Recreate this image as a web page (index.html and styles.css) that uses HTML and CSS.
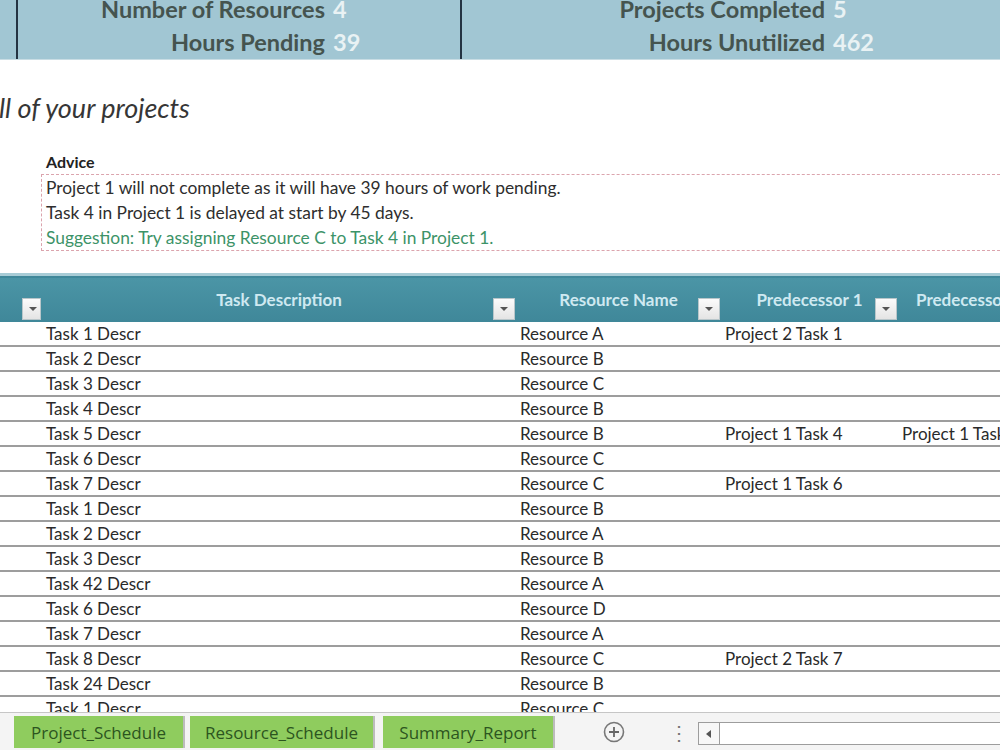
FILE: index.html
```html
<!DOCTYPE html>
<html lang="en">
<head>
  <meta charset="UTF-8" />
  <title>Project Schedule</title>
  <link rel="stylesheet" href="styles.css">
</head>
<body>
  <div class="sheet">
    <div class="stats">
      <div class="stat-edge"></div>
      <div class="stat-group first">
        <span class="stat-label">Number of Resources</span><span class="stat-value">4</span>
        <span class="stat-label">Hours Pending</span><span class="stat-value">39</span>
      </div>
      <div class="stat-group second">
        <span class="stat-label">Projects Completed</span><span class="stat-value">5</span>
        <span class="stat-label">Hours Unutilized</span><span class="stat-value">462</span>
      </div>
      <div class="stat-edge"></div>
    </div>

    <h2 class="title">ll of your projects</h2>

    <div class="advice">
      <div class="advice-head">Advice</div>
      <div class="advice-box">
        <div>Project 1 will not complete as it will have 39 hours of work pending.</div>
        <div>Task 4 in Project 1 is delayed at start by 45 days.</div>
        <div class="suggestion">Suggestion: Try assigning Resource C to Task 4 in Project 1.</div>
      </div>
    </div>

    <table class="tasks">
      <colgroup>
        <col class="c0"><col class="c1"><col class="c2"><col class="c3"><col class="c4">
      </colgroup>
      <thead>
        <tr>
          <th><div class="th"><span class="th-label"></span><span class="filter"></span></div></th>
          <th><div class="th"><span class="th-label">Task Description</span><span class="filter"></span></div></th>
          <th><div class="th"><span class="th-label">Resource Name</span><span class="filter"></span></div></th>
          <th><div class="th"><span class="th-label">Predecessor 1</span><span class="filter"></span></div></th>
          <th><div class="th"><span class="th-label left">Predecessor 2</span></div></th>
        </tr>
      </thead>
      <tbody>
        <tr><td></td><td>Task 1 Descr</td><td>Resource A</td><td>Project 2 Task 1</td><td></td></tr>
        <tr><td></td><td>Task 2 Descr</td><td>Resource B</td><td></td><td></td></tr>
        <tr><td></td><td>Task 3 Descr</td><td>Resource C</td><td></td><td></td></tr>
        <tr><td></td><td>Task 4 Descr</td><td>Resource B</td><td></td><td></td></tr>
        <tr><td></td><td>Task 5 Descr</td><td>Resource B</td><td>Project 1 Task 4</td><td>Project 1 Task 6</td></tr>
        <tr><td></td><td>Task 6 Descr</td><td>Resource C</td><td></td><td></td></tr>
        <tr><td></td><td>Task 7 Descr</td><td>Resource C</td><td>Project 1 Task 6</td><td></td></tr>
        <tr><td></td><td>Task 1 Descr</td><td>Resource B</td><td></td><td></td></tr>
        <tr><td></td><td>Task 2 Descr</td><td>Resource A</td><td></td><td></td></tr>
        <tr><td></td><td>Task 3 Descr</td><td>Resource B</td><td></td><td></td></tr>
        <tr><td></td><td>Task 42 Descr</td><td>Resource A</td><td></td><td></td></tr>
        <tr><td></td><td>Task 6 Descr</td><td>Resource D</td><td></td><td></td></tr>
        <tr><td></td><td>Task 7 Descr</td><td>Resource A</td><td></td><td></td></tr>
        <tr><td></td><td>Task 8 Descr</td><td>Resource C</td><td>Project 2 Task 7</td><td></td></tr>
        <tr><td></td><td>Task 24 Descr</td><td>Resource B</td><td></td><td></td></tr>
        <tr><td></td><td>Task 1 Descr</td><td>Resource C</td><td></td><td></td></tr>
      </tbody>
    </table>
  </div>

  <div class="tabbar">
    <div class="tab t1">Project_Schedule</div>
    <div class="tab t2">Resource_Schedule</div>
    <div class="tab t3">Summary_Report</div>
    <div class="add-sheet">
      <svg width="22" height="22" viewBox="0 0 22 22">
        <circle cx="11" cy="11" r="9.5" fill="none" stroke="#777" stroke-width="1.6"/>
        <path d="M11 6v10M6 11h10" stroke="#666" stroke-width="1.8"/>
      </svg>
    </div>
    <div class="more">&#8942;</div>
    <div class="hscroll">
      <span class="hscroll-btn">
        <svg width="6" height="8" viewBox="0 0 6 8"><path d="M5 0v8L0 4z" fill="#555"/></svg>
      </span>
    </div>
  </div>
</body>
</html>
```

FILE: styles.css
```css
html, body {
  margin: 0;
  height: 100%;
  overflow: hidden;
  background: #fff;
  font-family: Lato, "Liberation Sans", sans-serif;
  color: #2b2b2b;
}

body {
  display: flex;
  flex-direction: column;
  width: 1000px;
  height: 750px;
}

.sheet {
  flex: 1;
  overflow: hidden;
}

/* summary band across the top */
.stats {
  display: flex;
  height: 60px;
  background: #a1c6d3;
  overflow: hidden;
  border-bottom: 1px solid #c9dde4;
  box-sizing: border-box;
}

.stat-edge {
  width: 16px;
}
.stat-edge:last-child {
  flex: 1;
}

.stat-group {
  display: grid;
  align-content: start;
  column-gap: 8px;
  margin-top: -7px;
  border-left: 2px solid #243342;
  font-size: 23.5px;
  font-weight: bold;
  line-height: 33px;
}
.stat-group.first {
  width: 442px;
  grid-template-columns: 307px 1fr;
}
.stat-group.second {
  width: 475px;
  grid-template-columns: 363px 1fr;
}

.stat-label {
  text-align: right;
  color: #45544f;
}
.stat-value {
  color: #e9f2f4;
}

.title {
  margin: 33px 0 0 -1px;
  font-size: 27px;
  font-style: italic;
  font-weight: normal;
  line-height: 30px;
  color: #363636;
}

.advice {
  margin: 29px 0 0 41px;
  font-size: 17.4px;
}

.advice-head {
  padding-left: 5px;
  font-size: 16px;
  font-weight: bold;
  line-height: 20px;
  color: #222;
}

.advice-box {
  margin-top: 2px;
  border: 1px dashed #dba4ad;
  border-right: none;
  padding-left: 4px;
  line-height: 25px;
  color: #2e2e2e;
}

.suggestion {
  color: #3c9368;
}

/* task table */
.tasks {
  margin-top: 22px;
  width: 1060px;
  table-layout: fixed;
  border-collapse: collapse;
  font-size: 17px;
}

.c0 { width: 43px; }
.c1 { width: 474px; }
.c2 { width: 205px; }
.c3 { width: 177px; }
.c4 { width: 161px; }

.tasks thead tr {
  background: linear-gradient(#4b95a6, #3f8799);
  border-top: 3px solid #a8ccd6;
}

.tasks th {
  height: 46px;
  padding: 0;
  vertical-align: top;
}

.th {
  display: flex;
  align-items: flex-start;
  height: 46px;
}

/* label centred over the whole cell, the filter button sits at the right */
.th-label {
  flex: 1;
  padding: 13px 0 0 22px;
  text-align: center;
  font-size: 17px;
  font-weight: bold;
  color: #cfe9f1;
}
.th-label.left {
  text-align: left;
  padding-left: 17px;
}

.filter {
  position: relative;
  width: 20px;
  height: 20px;
  margin: 22px 2px 0 0;
  background: linear-gradient(#fbfbfb, #e4e4e4);
  border: 1px solid #b9c6ca;
}
.filter::after {
  content: "";
  position: absolute;
  left: 6px;
  top: 8px;
  border-left: 4px solid transparent;
  border-right: 4px solid transparent;
  border-top: 4px solid #555;
}

.tasks td {
  height: 23px;
  padding: 0 3px;
  line-height: 23px;
  white-space: nowrap;
  overflow: hidden;
  border-bottom: 2px solid #9d9d9d;
  color: #2a2a2a;
}

/* sheet tabs and scroller */
.tabbar {
  display: flex;
  align-items: stretch;
  height: 38px;
  padding: 3px 0 2px 14px;
  box-sizing: border-box;
  border-top: 1px solid #c6c6c6;
  background: #f4f4f4;
}

.tab {
  border-right: 2px solid #bcbcbc;
  background: #8fcc5e;
  color: #2c5520;
  font-family: "Open Sans", Lato, sans-serif;
  font-size: 17px;
  line-height: 33px;
  text-align: center;
  white-space: nowrap;
}
.tab.t1 { width: 169px; margin-right: 5px; }
.tab.t2 { width: 183px; margin-right: 8px; }
.tab.t3 { width: 170px; }

.add-sheet {
  display: flex;
  align-items: center;
  width: 22px;
  margin-left: 48px;
}

.more {
  width: 10px;
  margin-left: 44px;
  text-align: center;
  color: #777;
  font-size: 20px;
  line-height: 33px;
}

.hscroll {
  flex: 1;
  display: flex;
  margin: 6px 0 3px 19px;
  border: 1px solid #9d9d9d;
  border-right: none;
  background: #fff;
}

.hscroll-btn {
  display: flex;
  align-items: center;
  justify-content: center;
  width: 20px;
  border-right: 1px solid #9d9d9d;
  background: #f7f7f7;
}
```
